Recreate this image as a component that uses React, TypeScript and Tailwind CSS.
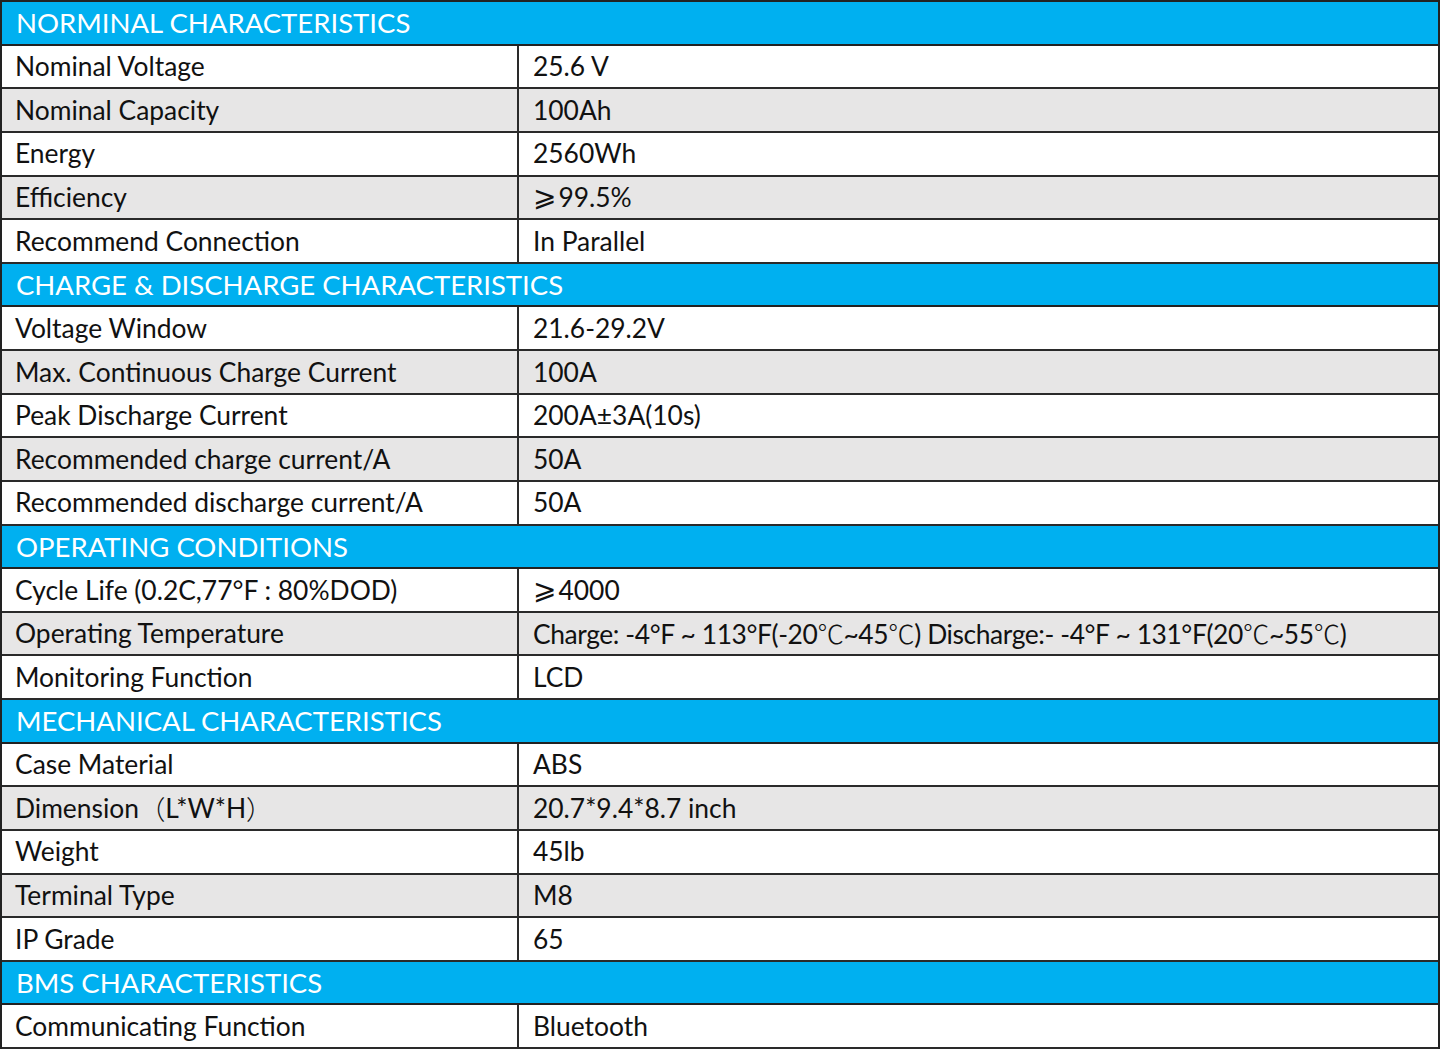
import React from 'react';

type Row = { h?: string; k?: React.ReactNode; v?: React.ReactNode };

const Wide: React.FC<{ children: React.ReactNode }> = ({ children }) => (
  <span style={{ fontFamily: '"Noto Sans CJK SC", sans-serif' }} className="font-light">
    {children}
  </span>
);

const Geq = () => (
  <span style={{ fontFamily: '"DejaVu Sans", sans-serif' }} className="text-[28px] mr-[2px]">⩾</span>
);

const rows: Row[] = [
  { h: 'NORMINAL CHARACTERISTICS' },
  { k: 'Nominal Voltage', v: '25.6 V' },
  { k: 'Nominal Capacity', v: '100Ah' },
  { k: 'Energy', v: '2560Wh' },
  { k: 'Efficiency', v: <><Geq />99.5%</> },
  { k: 'Recommend Connection', v: 'In Parallel' },
  { h: 'CHARGE & DISCHARGE CHARACTERISTICS' },
  { k: 'Voltage Window', v: '21.6-29.2V' },
  { k: 'Max. Continuous Charge Current', v: '100A' },
  { k: 'Peak Discharge Current', v: '200A±3A(10s)' },
  { k: 'Recommended charge current/A', v: '50A' },
  { k: 'Recommended discharge current/A', v: '50A' },
  { h: 'OPERATING CONDITIONS' },
  { k: 'Cycle Life (0.2C,77°F : 80%DOD)', v: <><Geq />4000</> },
  {
    k: 'Operating Temperature',
    v: (
      <span className="tracking-[-0.4px]">
        Charge: -4°F ~ 113°F(-20<Wide>℃</Wide>~45<Wide>℃</Wide>) Discharge:- -4°F ~ 131°F(20<Wide>℃</Wide>~55<Wide>℃</Wide>)
      </span>
    ),
  },
  { k: 'Monitoring Function', v: 'LCD' },
  { h: 'MECHANICAL CHARACTERISTICS' },
  { k: 'Case Material', v: 'ABS' },
  { k: <>Dimension<Wide>（</Wide>L*W*H<Wide>）</Wide></>, v: '20.7*9.4*8.7 inch' },
  { k: 'Weight', v: '45lb' },
  { k: 'Terminal Type', v: 'M8' },
  { k: 'IP Grade', v: '65' },
  { h: 'BMS CHARACTERISTICS' },
  { k: 'Communicating Function', v: 'Bluetooth' },
];

const App: React.FC = () => {
  let n = 0;
  return (
    <div
      className="w-[1440px] bg-white text-[#111]"
      style={{ fontFamily: 'Lato, "Noto Sans CJK SC", sans-serif' }}
    >
      <div className="border-t-2 border-l-2 border-r-2 border-[#222]">
        {rows.map((r, i) => {
          if (r.h) {
            n = 0;
            return (
              <div
                key={i}
                className="h-[43.625px] bg-[#00b0f0] border-b-2 border-[#222] flex items-center pl-[14px] text-white text-[27.5px] leading-none"
              >
                {r.h}
              </div>
            );
          }
          n++;
          const gray = n % 2 === 0;
          return (
            <div
              key={i}
              className={`h-[43.625px] border-b-2 border-[#2a2a2a] flex text-[26.4px] leading-none whitespace-nowrap ${gray ? 'bg-[#e7e6e6]' : 'bg-white'}`}
            >
              <div className="w-[517px] border-r-2 border-[#2a2a2a] flex items-center pl-[13px]">{r.k}</div>
              <div className="flex-1 flex items-center pl-[14px]">{r.v}</div>
            </div>
          );
        })}
      </div>
    </div>
  );
};

export default App;
